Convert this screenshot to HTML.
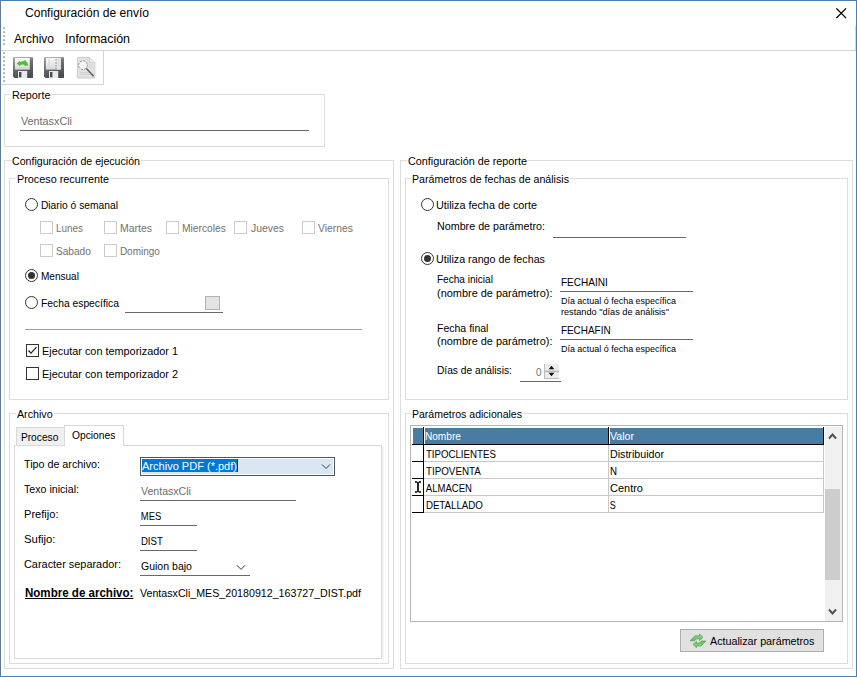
<!DOCTYPE html>
<html><head><meta charset="utf-8"><title>Configuración de envío</title>
<style>
html,body{margin:0;padding:0;background:#fff;}
body{width:857px;height:677px;overflow:hidden;font-family:"Liberation Sans",sans-serif;font-size:11px;}
#win{position:absolute;left:0;top:0;width:857px;height:677px;background:#fff;overflow:hidden;}
.t{position:absolute;white-space:nowrap;line-height:16px;height:16px;transform-origin:0 50%;font-family:"Liberation Sans",sans-serif;padding:0 1px;margin-left:-1px;}
.a{position:absolute;box-sizing:border-box;}
.gb{position:absolute;box-sizing:border-box;border:1px solid #dcdcdc;}
.ln{position:absolute;background:#696969;height:1px;}
.cb{position:absolute;box-sizing:border-box;width:13px;height:13px;border:1px solid #333;background:#fff;}
.cb.dis{border-color:#cccccc;}
.rb{position:absolute;box-sizing:border-box;width:13px;height:13px;border:1px solid #333;border-radius:50%;background:#fff;}
.rb.on::after{content:"";position:absolute;left:2px;top:2px;width:7px;height:7px;border-radius:50%;background:#333;}

</style></head><body>
<div id="win">
<!-- window frame -->
<div class="a" style="left:0;top:0;width:857px;height:677px;border:1px solid #4a7eb0;border-left-color:#617c99;"></div>
<!-- close X -->
<svg class="a" style="left:836px;top:8px;" width="11" height="11" viewBox="0 0 11 11"><path d="M0.4 0.4 L10.1 10.1 M10.1 0.4 L0.4 10.1" stroke="#000" stroke-width="1.25" fill="none"/></svg>
<div class="a" style="left:855px;top:26px;width:1px;height:25px;background:#d8d5d3;"></div>
<!-- menu bottom line / toolbar -->
<div class="a" style="left:1px;top:50px;width:854px;height:1px;background:#d5d5d5;"></div>
<div class="a" style="left:1px;top:84px;width:103px;height:1px;background:#d5d5d5;"></div>
<div class="a" style="left:103px;top:51px;width:1px;height:34px;background:#d5d5d5;"></div>
<!-- grippers -->
<svg class="a" style="left:3px;top:27px;" width="2" height="56" viewBox="0 0 2 56" shape-rendering="crispEdges">
<g fill="#c4c4c4">
<rect x="0" y="0" width="2" height="2"/><rect x="0" y="4" width="2" height="2"/><rect x="0" y="8" width="2" height="2"/><rect x="0" y="12" width="2" height="2"/><rect x="0" y="16" width="2" height="2"/>
<rect x="0" y="25" width="2" height="2"/><rect x="0" y="29" width="2" height="2"/><rect x="0" y="33" width="2" height="2"/><rect x="0" y="37" width="2" height="2"/><rect x="0" y="41" width="2" height="2"/><rect x="0" y="45" width="2" height="2"/><rect x="0" y="49" width="2" height="2"/><rect x="0" y="53" width="2" height="2"/>
</g>
<g fill="#9c9c9c">
<rect x="1" y="1" width="1" height="1"/><rect x="1" y="5" width="1" height="1"/><rect x="1" y="9" width="1" height="1"/><rect x="1" y="13" width="1" height="1"/><rect x="1" y="17" width="1" height="1"/>
<rect x="1" y="26" width="1" height="1"/><rect x="1" y="30" width="1" height="1"/><rect x="1" y="34" width="1" height="1"/><rect x="1" y="38" width="1" height="1"/><rect x="1" y="42" width="1" height="1"/><rect x="1" y="46" width="1" height="1"/><rect x="1" y="50" width="1" height="1"/><rect x="1" y="54" width="1" height="1"/>
</g></svg>
<!-- toolbar icons -->
<svg class="a" style="left:12px;top:56px;" width="24" height="24" viewBox="0 0 24 24">
<defs><linearGradient id="fg" x1="0" y1="0" x2="0.3" y2="1"><stop offset="0" stop-color="#9a9da0"/><stop offset="0.5" stop-color="#6a6d70"/><stop offset="1" stop-color="#4c4f52"/></linearGradient>
<linearGradient id="lg" x1="0" y1="0" x2="0" y2="1"><stop offset="0" stop-color="#fbfbfb"/><stop offset="1" stop-color="#d6d6d6"/></linearGradient></defs>
<path d="M1.6 1.2 H20.4 Q21 1.2 21 1.8 V21.4 Q21 22 20.4 22 H2.6 L1 20.6 V1.8 Q1 1.2 1.6 1.2Z" fill="url(#fg)"/>
<rect x="2.8" y="2" width="15" height="11.6" fill="url(#lg)"/>
<rect x="6" y="15" width="9.2" height="7" fill="#e9e9e9"/>
<rect x="7" y="16" width="2.4" height="5.4" fill="#4a4d50"/>
<path d="M4.7 7.6 L8 4.8 L8.2 6 Q11 5.2 12.6 4.4 L13.2 3.8 L13.8 5 Q16.2 6.6 16.2 9.4 L12.6 9.8 Q12.4 8.6 11 8.6 L8.2 9 L8 10.2 Z" fill="#4fc22f"/>
<path d="M7 11.5 H14" stroke="#b9dcae" stroke-width="0.8" stroke-dasharray="1 1"/>
</svg>
<svg class="a" style="left:43px;top:56px;" width="24" height="24" viewBox="0 0 24 24">
<path d="M1.6 1.2 H20.4 Q21 1.2 21 1.8 V21.4 Q21 22 20.4 22 H2.6 L1 20.6 V1.8 Q1 1.2 1.6 1.2Z" fill="url(#fg)"/>
<rect x="2.8" y="2" width="15" height="11.6" fill="url(#lg)"/>
<rect x="5.6" y="2.5" width="1" height="10.6" fill="#d2d2d2"/>
<rect x="13.6" y="2.5" width="4.2" height="11" fill="#e2e2e2"/>
<path d="M13 3 V13" stroke="#8c8c8c" stroke-width="1" stroke-dasharray="1.6 1.4"/>
<rect x="6" y="15" width="9.2" height="7" fill="#e9e9e9"/>
<rect x="7" y="16" width="2.4" height="5.4" fill="#4a4d50"/>
</svg>
<svg class="a" style="left:75px;top:56px;" width="24" height="24" viewBox="0 0 24 24">
<path d="M2.5 1.5 H14.5 L19.8 6.5 V22 H2.5 Z" fill="#e2e2e2" stroke="#cdcdcd" stroke-width="1"/>
<path d="M14.5 1.5 V6.5 H19.8" fill="#ececec" stroke="#cdcdcd" stroke-width="0.8"/>
<path d="M5 16.5 H16 M5 18.5 H17 M14 9 H17.5 M14 11 H17.5" stroke="#d2d2d2" stroke-width="1"/>
<circle cx="8" cy="9.2" r="4.4" fill="#f4f4f4" stroke="#8a8a8a" stroke-width="0.9" stroke-dasharray="2.2 1.2"/>
<path d="M11.4 12.6 L18.6 20.2" stroke="#5c5c5c" stroke-width="1.5"/>
</svg>

<!-- group boxes -->
<div class="gb" style="left:4px;top:94px;width:321px;height:53px;"></div>
<div class="gb" style="left:4px;top:160px;width:390px;height:509px;"></div>
<div class="gb" style="left:9px;top:178px;width:380px;height:222px;"></div>
<div class="gb" style="left:400px;top:160px;width:453px;height:509px;"></div>
<div class="gb" style="left:405px;top:178px;width:443px;height:222px;"></div>
<div class="gb" style="left:9px;top:413px;width:380px;height:251px;"></div>
<div class="gb" style="left:405px;top:413px;width:443px;height:251px;"></div>

<!-- Reporte underline -->
<div class="ln" style="left:20px;top:130px;width:289px;"></div>

<!-- left: radios / checks -->
<div class="rb" style="left:25px;top:198px;"></div>
<div class="cb dis" style="left:40px;top:221px;"></div>
<div class="cb dis" style="left:104px;top:221px;"></div>
<div class="cb dis" style="left:166px;top:221px;"></div>
<div class="cb dis" style="left:234px;top:221px;"></div>
<div class="cb dis" style="left:302px;top:221px;"></div>
<div class="cb dis" style="left:40px;top:244px;"></div>
<div class="cb dis" style="left:104px;top:244px;"></div>
<div class="rb on" style="left:25px;top:269px;"></div>
<div class="rb" style="left:25px;top:296px;"></div>
<div class="ln" style="left:125px;top:312px;width:98px;"></div>
<div class="a" style="left:205px;top:296px;width:15px;height:14px;background:#e3e3e3;border:1px solid #b2b2b2;"></div>
<div class="ln" style="left:25px;top:329px;width:337px;background:#a0a0a0;"></div>
<div class="cb" style="left:26px;top:344px;"></div>
<svg class="a" style="left:26px;top:344px;" width="13" height="13" viewBox="0 0 13 13"><path d="M2.5 6.5 L5 9.2 L10.5 3.2" stroke="#1a1a1a" stroke-width="1.2" fill="none"/></svg>
<div class="cb" style="left:26px;top:367px;"></div>

<!-- right: radios / lines -->
<div class="rb" style="left:421px;top:198px;"></div>
<div class="ln" style="left:553px;top:237px;width:133px;"></div>
<div class="rb on" style="left:421px;top:252px;"></div>
<div class="ln" style="left:560px;top:291px;width:133px;"></div>
<div class="ln" style="left:560px;top:339px;width:133px;"></div>
<div class="ln" style="left:520px;top:381px;width:41px;"></div>
<!-- spinner -->
<div class="a" style="left:544px;top:364px;width:15px;height:15px;background:#ededed;border-left:1px solid #bcbcbc;border-bottom:1px solid #bcbcbc;"></div>
<svg class="a" style="left:544px;top:364px;" width="15" height="15" viewBox="0 0 15 15"><path d="M1 7.4 H15" stroke="#b6b6b6" stroke-width="1.5"/><path d="M4.6 5.2 L7.5 1.8 L10.4 5.2 Z M4.6 8.8 L7.5 12.2 L10.4 8.8 Z" fill="#111"/></svg>

<!-- tabs -->
<div class="a" style="left:382px;top:446px;width:2px;height:214px;background:#f3f3f3;"></div>
<div class="a" style="left:14px;top:445px;width:368px;height:214px;border:1px solid #d9d9d9;background:#fff;"></div>
<div class="a" style="left:16px;top:427px;width:49px;height:19px;border:1px solid #d9d9d9;background:#f0f0f0;"></div>
<div class="a" style="left:64px;top:425px;width:60px;height:21px;border:1px solid #d9d9d9;border-bottom:none;background:#fff;"></div>

<!-- combo -->
<div class="a" style="left:140px;top:457px;width:195px;height:19px;border:1px solid #555;background:#fff;"></div>
<div class="a" style="left:142px;top:459px;width:191px;height:15px;background:#d9e6f4;"></div>
<div class="a" style="left:142px;top:459px;width:95px;height:13px;background:#0078d7;"></div>
<div class="a" style="left:237px;top:459px;width:1px;height:13px;background:#333;"></div>
<svg class="a" style="left:321px;top:463px;" width="10" height="7" viewBox="0 0 10 7"><path d="M1 1.5 L5 5.5 L9 1.5" stroke="#3a3a3a" stroke-width="1" fill="none"/></svg>
<div class="ln" style="left:140px;top:500px;width:156px;"></div>
<div class="ln" style="left:140px;top:525px;width:57px;"></div>
<div class="ln" style="left:140px;top:550px;width:57px;"></div>
<div class="ln" style="left:140px;top:575px;width:110px;"></div>
<svg class="a" style="left:236px;top:564px;" width="10" height="7" viewBox="0 0 10 7"><path d="M0.8 1.2 L5 5.4 L9.2 1.2" stroke="#3a3a3a" stroke-width="1" fill="none"/></svg>

<!-- grid -->
<div class="a" style="left:410px;top:425px;width:433px;height:197px;border:1px solid #b4b4bc;background:#fff;"></div>
<div class="a" style="left:413px;top:428px;width:10px;height:16px;background:#4a7ba3;"></div>
<div class="a" style="left:425px;top:428px;width:183px;height:16px;background:#4a7ba3;"></div>
<div class="a" style="left:610px;top:428px;width:213px;height:16px;background:#4a7ba3;"></div>
<div class="a" style="left:412px;top:444px;width:412px;height:1px;background:#000;"></div>
<div class="a" style="left:423px;top:427px;width:1px;height:86px;background:#000;"></div>
<div class="a" style="left:608px;top:427px;width:1px;height:18px;background:#000;"></div>
<div class="a" style="left:823px;top:427px;width:1px;height:18px;background:#000;"></div>
<!-- row lines -->
<div class="a" style="left:424px;top:461px;width:400px;height:1px;background:#c8c8c8;"></div>
<div class="a" style="left:424px;top:478px;width:400px;height:1px;background:#c8c8c8;"></div>
<div class="a" style="left:424px;top:495px;width:400px;height:1px;background:#c8c8c8;"></div>
<div class="a" style="left:424px;top:512px;width:400px;height:1px;background:#c8c8c8;"></div>
<div class="a" style="left:608px;top:445px;width:1px;height:68px;background:#c8c8c8;"></div>
<div class="a" style="left:823px;top:445px;width:1px;height:68px;background:#c8c8c8;"></div>
<div class="a" style="left:412px;top:461px;width:12px;height:1px;background:#000;"></div>
<div class="a" style="left:412px;top:478px;width:12px;height:1px;background:#000;"></div>
<div class="a" style="left:412px;top:495px;width:12px;height:1px;background:#000;"></div>
<div class="a" style="left:412px;top:512px;width:12px;height:1px;background:#000;"></div>
<!-- I-beam cursor -->
<svg class="a" style="left:414px;top:481px;" width="8" height="12" viewBox="0 0 8 12"><path d="M1 1 H3.2 M4.8 1 H7 M1 11 H3.2 M4.8 11 H7" stroke="#000" stroke-width="1.3" fill="none"/><path d="M4 1 V11" stroke="#000" stroke-width="1.7" fill="none"/></svg>
<!-- scrollbar -->
<div class="a" style="left:825px;top:427px;width:17px;height:194px;background:#f0f0f0;"></div>
<div class="a" style="left:825px;top:489px;width:15px;height:91px;background:#cdcdcd;"></div>
<svg class="a" style="left:828px;top:432px;" width="9" height="8" viewBox="0 0 9 8"><path d="M1 6.5 L4.5 2.5 L8 6.5" stroke="#505050" stroke-width="1.9" fill="none"/></svg>
<svg class="a" style="left:828px;top:608px;" width="9" height="8" viewBox="0 0 9 8"><path d="M1 1.5 L4.5 5.5 L8 1.5" stroke="#505050" stroke-width="1.9" fill="none"/></svg>

<!-- button -->
<div class="a" style="left:680px;top:629px;width:144px;height:23px;background:#e1e1e1;border:1px solid #adadad;"></div>
<svg class="a" style="left:689px;top:633px;" width="18" height="16" viewBox="0 0 18 16">
<defs><linearGradient id="gg" x1="0" y1="0" x2="0" y2="1"><stop offset="0" stop-color="#a2dc9e"/><stop offset="1" stop-color="#5db659"/></linearGradient></defs>
<path id="arw" d="M1 7.8 L5.5 7.8 L7.5 5.8 L10.5 5.8 L10.5 7.6 L14 4.3 L10.5 1 L10.5 2.8 L6 2.8 Z" fill="url(#gg)" stroke="#4fa64b" stroke-width="0.7" stroke-linejoin="round"/>
<use href="#arw" transform="rotate(180 9 7.9)"/>
</svg>

<span class="t" id="t0" style="left:25px;top:4.5px;font-size:12px;color:#000;transform:scaleX(1.0047);">Configuración de envío</span>
<span class="t" id="t1" style="left:14px;top:31px;font-size:12px;color:#000;transform:scaleX(0.9996);">Archivo</span>
<span class="t" id="t2" style="left:65px;top:31px;font-size:12px;color:#000;transform:scaleX(1.0366);">Información</span>
<span class="t" id="t3" style="left:12px;top:87px;font-size:11px;color:#000;background:#fff;transform:scaleX(0.9836);">Reporte</span>
<span class="t" id="t4" style="left:12px;top:153px;font-size:11px;color:#000;background:#fff;transform:scaleX(0.9646);">Configuración de ejecución</span>
<span class="t" id="t5" style="left:16.7px;top:171px;font-size:11px;color:#000;background:#fff;transform:scaleX(0.9835);">Proceso recurrente</span>
<span class="t" id="t6" style="left:408px;top:153px;font-size:11px;color:#000;background:#fff;transform:scaleX(0.9828);">Configuración de reporte</span>
<span class="t" id="t7" style="left:412.3px;top:171px;font-size:11px;color:#000;background:#fff;transform:scaleX(0.9652);">Parámetros de fechas de análisis</span>
<span class="t" id="t8" style="left:16.7px;top:406px;font-size:11px;color:#000;background:#fff;transform:scaleX(0.9731);">Archivo</span>
<span class="t" id="t9" style="left:412.2px;top:406px;font-size:11px;color:#000;background:#fff;transform:scaleX(0.9569);">Parámetros adicionales</span>
<span class="t" id="t10" style="left:20.6px;top:113px;font-size:11px;color:#6d6d6d;transform:scaleX(0.9811);">VentasxCli</span>
<span class="t" id="t11" style="left:41px;top:197px;font-size:11px;color:#000;transform:scaleX(0.9328);">Diario ó semanal</span>
<span class="t" id="t12" style="left:56.3px;top:220px;font-size:11px;color:#727272;transform:scaleX(0.9005);">Lunes</span>
<span class="t" id="t13" style="left:120.3px;top:220px;font-size:11px;color:#727272;transform:scaleX(0.9517);">Martes</span>
<span class="t" id="t14" style="left:182.4px;top:220px;font-size:11px;color:#727272;transform:scaleX(0.9346);">Miercoles</span>
<span class="t" id="t15" style="left:251px;top:220px;font-size:11px;color:#727272;transform:scaleX(0.9467);">Jueves</span>
<span class="t" id="t16" style="left:318.3px;top:220px;font-size:11px;color:#727272;transform:scaleX(0.9432);">Viernes</span>
<span class="t" id="t17" style="left:56.3px;top:243px;font-size:11px;color:#727272;transform:scaleX(0.9226);">Sabado</span>
<span class="t" id="t18" style="left:120.3px;top:243px;font-size:11px;color:#727272;transform:scaleX(0.9084);">Domingo</span>
<span class="t" id="t19" style="left:41px;top:268px;font-size:11px;color:#000;transform:scaleX(0.9139);">Mensual</span>
<span class="t" id="t20" style="left:41px;top:295px;font-size:11px;color:#000;transform:scaleX(0.9380);">Fecha específica</span>
<span class="t" id="t21" style="left:42px;top:343px;font-size:11px;color:#000;transform:scaleX(0.9885);">Ejecutar con temporizador 1</span>
<span class="t" id="t22" style="left:42px;top:366px;font-size:11px;color:#000;transform:scaleX(0.9885);">Ejecutar con temporizador 2</span>
<span class="t" id="t23" style="left:436px;top:197px;font-size:11px;color:#000;transform:scaleX(0.9833);">Utiliza fecha de corte</span>
<span class="t" id="t24" style="left:437px;top:218px;font-size:11px;color:#000;transform:scaleX(0.9759);">Nombre de parámetro:</span>
<span class="t" id="t25" style="left:436px;top:251px;font-size:11px;color:#000;transform:scaleX(0.9740);">Utiliza rango de fechas</span>
<span class="t" id="t26" style="left:437px;top:271px;font-size:11px;color:#000;transform:scaleX(0.9159);">Fecha inicial</span>
<span class="t" id="t27" style="left:437px;top:285px;font-size:11px;color:#000;transform:scaleX(0.9942);">(nombre de parámetro):</span>
<span class="t" id="t28" style="left:560.5px;top:274px;font-size:11px;color:#000;transform:scaleX(0.9154);">FECHAINI</span>
<span class="t" id="t29" style="left:560.5px;top:293px;font-size:9.5px;color:#000;transform:scaleX(0.9426);">Día actual ó fecha específica</span>
<span class="t" id="t30" style="left:560.5px;top:304px;font-size:9.5px;color:#000;transform:scaleX(0.9656);">restando "días de análisis"</span>
<span class="t" id="t31" style="left:437px;top:320px;font-size:11px;color:#000;transform:scaleX(0.9570);">Fecha final</span>
<span class="t" id="t32" style="left:437px;top:333px;font-size:11px;color:#000;transform:scaleX(0.9942);">(nombre de parámetro):</span>
<span class="t" id="t33" style="left:560.5px;top:322px;font-size:11px;color:#000;transform:scaleX(0.9036);">FECHAFIN</span>
<span class="t" id="t34" style="left:560.5px;top:340.5px;font-size:9.5px;color:#000;transform:scaleX(0.9426);">Día actual ó fecha específica</span>
<span class="t" id="t35" style="left:437px;top:362px;font-size:11px;color:#000;transform:scaleX(0.9292);">Días de análisis:</span>
<span class="t" id="t36" style="left:536px;top:364px;font-size:11px;color:#727272;transform:scaleX(0.8980);">0</span>
<span class="t" id="t37" style="left:21px;top:429px;font-size:11px;color:#000;transform:scaleX(0.9267);">Proceso</span>
<span class="t" id="t38" style="left:71.5px;top:427px;font-size:11px;color:#000;transform:scaleX(0.9336);">Opciones</span>
<span class="t" id="t39" style="left:24.3px;top:456px;font-size:11px;color:#000;transform:scaleX(0.9761);">Tipo de archivo:</span>
<span class="t" id="t40" style="left:141.5px;top:458px;font-size:11px;color:#fff;transform:scaleX(1.0026);">Archivo PDF (*.pdf)</span>
<span class="t" id="t41" style="left:24.3px;top:481px;font-size:11px;color:#000;transform:scaleX(0.9673);">Texo inicial:</span>
<span class="t" id="t42" style="left:140.5px;top:483px;font-size:11px;color:#6d6d6d;transform:scaleX(0.9618);">VentasxCli</span>
<span class="t" id="t43" style="left:24.3px;top:505.5px;font-size:11px;color:#000;transform:scaleX(1.0073);">Prefijo:</span>
<span class="t" id="t44" style="left:140.5px;top:507.5px;font-size:11px;color:#000;transform:scaleX(0.8598);">MES</span>
<span class="t" id="t45" style="left:24.3px;top:531px;font-size:11px;color:#000;transform:scaleX(1.0301);">Sufijo:</span>
<span class="t" id="t46" style="left:140.5px;top:532.5px;font-size:11px;color:#000;transform:scaleX(0.8778);">DIST</span>
<span class="t" id="t47" style="left:24.3px;top:556px;font-size:11px;color:#000;transform:scaleX(0.9915);">Caracter separador:</span>
<span class="t" id="t48" style="left:140.5px;top:558px;font-size:11px;color:#000;transform:scaleX(0.9583);">Guion bajo</span>
<span class="t" id="t49" style="left:25px;top:584.6px;font-size:12px;color:#000;font-weight:bold;text-decoration:underline;transform:scaleX(0.9627);">Nombre de archivo:</span>
<span class="t" id="t50" style="left:139.7px;top:584.5px;font-size:11px;color:#000;transform:scaleX(0.9688);">VentasxCli_MES_20180912_163727_DIST.pdf</span>
<span class="t" id="t51" style="left:424.5px;top:428px;font-size:11px;color:#fff;transform:scaleX(0.9201);">Nombre</span>
<span class="t" id="t52" style="left:610px;top:428px;font-size:11px;color:#fff;transform:scaleX(0.9648);">Valor</span>
<span class="t" id="t53" style="left:425.5px;top:446px;font-size:11px;color:#000;transform:scaleX(0.8808);">TIPOCLIENTES</span>
<span class="t" id="t54" style="left:610px;top:446px;font-size:11px;color:#000;transform:scaleX(0.9705);">Distribuidor</span>
<span class="t" id="t55" style="left:425.5px;top:463px;font-size:11px;color:#000;transform:scaleX(0.8939);">TIPOVENTA</span>
<span class="t" id="t56" style="left:610px;top:463px;font-size:11px;color:#000;transform:scaleX(0.8802);">N</span>
<span class="t" id="t57" style="left:425.5px;top:480px;font-size:11px;color:#000;transform:scaleX(0.8649);">ALMACEN</span>
<span class="t" id="t58" style="left:610px;top:480px;font-size:11px;color:#000;transform:scaleX(0.9991);">Centro</span>
<span class="t" id="t59" style="left:425.5px;top:497px;font-size:11px;color:#000;transform:scaleX(0.8824);">DETALLADO</span>
<span class="t" id="t60" style="left:610px;top:497px;font-size:11px;color:#000;transform:scaleX(0.8170);">S</span>
<span class="t" id="t61" style="left:710px;top:633px;font-size:11px;color:#000;transform:scaleX(0.9766);">Actualizar parámetros</span>
</div>
</body></html>
